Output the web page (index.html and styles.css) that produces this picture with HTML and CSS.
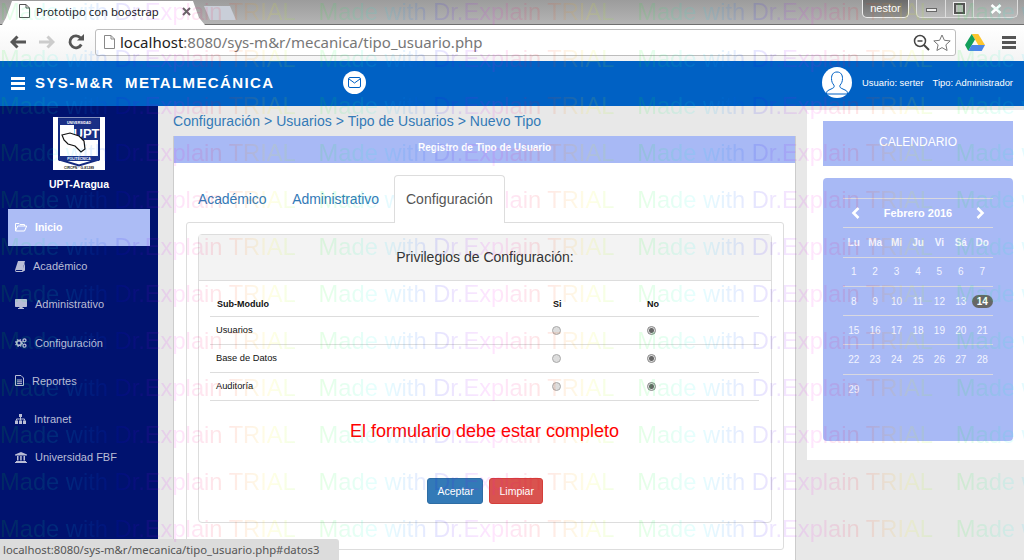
FILE: index.html
```html
<!DOCTYPE html>
<html lang="es">
<head>
    <meta charset="UTF-8">
    <meta name="viewport" content="width=device-width, initial-scale=1.0">
    <title>Prototipo con boostrap</title>
    <link rel="stylesheet" href="styles.css">
</head>
<body>
<div class="browser">
    <!-- Pestañas de Chrome -->
    <div class="tabstrip">
        <div class="tab">
            <svg class="tab-icon" width="11" height="14" viewBox="0 0 11 14"><path d="M.5.5h6.5l3.500 3.500v9.500h-10z M7 .5v3.500h3.500" fill="#fff" stroke="#555"/></svg>
            <span class="tab-title">Prototipo con boostrap</span>
            <svg class="tab-close" width="9" height="9" viewBox="0 0 9 9"><path d="M1 1l7 7M8 1l-7 7" stroke="#666" stroke-width="2"/></svg>
        </div>
        <div class="tab-new"></div>
        <div class="window-ctrl">
            <span class="win-user">nestor</span>
            <div class="win-btns">
                <span class="win-btn win-min"><i></i></span>
                <span class="win-btn win-max"><i></i></span>
                <span class="win-btn win-close">
                    <svg width="12" height="10" viewBox="0 0 12 10"><path d="M1.500 1l9 8M10.500 1l-9 8" stroke="#fff" stroke-width="2.600"/></svg>
                </span>
            </div>
        </div>
    </div>

    <div class="toolbar">
        <svg class="tool tool-back" width="16" height="14" viewBox="0 0 16 14"><path d="M7.500 1.500L2 7l5.500 5.500M2.500 7H16" fill="none" stroke="#555" stroke-width="3"/></svg>
        <svg class="tool tool-fwd" width="16" height="14" viewBox="0 0 16 14"><path d="M8.500 1.500L14 7l-5.500 5.500M13.500 7H0" fill="none" stroke="#ccc" stroke-width="3"/></svg>
        <svg class="tool tool-reload" width="16" height="16" viewBox="0 0 16 16"><path d="M13.300 10.500A6 6 0 1 1 12.600 4" fill="none" stroke="#555" stroke-width="2.800"/><path d="M9 6.500h7V0z" fill="#555"/></svg>
        <div class="addressbar">
            <svg class="addr-icon" width="11" height="14" viewBox="0 0 11 14"><path d="M.5.5h6.500l3.500 3.500v9.500h-10z M7 .5v3.500h3.500" fill="#fff" stroke="#888"/></svg>
            <span class="addr-url"><b>localhost</b>:8080/sys-m&amp;r/mecanica/tipo_usuario.php</span>
            <svg class="addr-zoom" width="17" height="17" viewBox="0 0 17 17"><circle cx="7" cy="7" r="5.500" fill="none" stroke="#444" stroke-width="1.500"/><path d="M4.500 7h5" stroke="#444" stroke-width="1.500"/><path d="M11 11l5 5" stroke="#444" stroke-width="2"/></svg>
            <svg class="addr-star" width="18" height="17" viewBox="0 0 18 17"><path d="M9 1l2.400 5.300 5.800.6-4.300 3.900 1.200 5.700L9 13.600l-5.100 2.900 1.200-5.700L.8 6.900l5.800-.6z" fill="#fff" stroke="#777"/></svg>
        </div>
        <svg class="tool-drive" width="20" height="17" viewBox="0 0 20 17"><path d="M6.700 0h6.600l6.700 11h-6.700z" fill="#fdc62f"/><path d="M6.700 0l3.300 5.500L3.300 17 0 11z" fill="#139f5b"/><path d="M3.300 17l3.300-6H20l-3.300 6z" fill="#4a86e8"/></svg>
        <div class="tool-menu"><i></i><i></i><i></i></div>
    </div>

    <!-- Barra superior -->
    <header class="topbar">
        <div class="burger"><i></i><i></i><i></i></div>
        <div class="brand"><span>SYS-M&amp;R</span><span>METALMECÁNICA</span></div>
        <span class="mail-badge">
            <svg width="13" height="11" viewBox="0 0 13 11"><rect x=".5" y=".5" width="12" height="10" rx="1.500" fill="none" stroke="#0061c4"/><path d="M1 2l5.500 4L12 2" fill="none" stroke="#0061c4"/></svg>
        </span>
        <div class="user-box">
            <span class="avatar">
                <svg width="22" height="24" viewBox="0 0 22 24"><path d="M11 1c-4 0-5.500 3-5.500 6.500 0 3 1 5 2.300 6.500.7 1 .5 2.500-1 3.200L2 19.500c-1 .6-1.500 1.500-1.500 3.500h21c0-2-.5-2.900-1.500-3.500l-4.800-2.300c-1.500-.7-1.700-2.200-1-3.200 1.300-1.500 2.300-3.500 2.300-6.500C16.500 4 15 1 11 1z" fill="none" stroke="#0061c4"/></svg>
            </span>
            <span class="user-text">Usuario: serter</span>
            <span class="user-text">Tipo: Administrador</span>
        </div>
    </header>

    <div class="main">
        <!-- Menu lateral -->
        <aside class="sidebar">
            <div class="logo">
                <svg width="52" height="53" viewBox="0 0 52 53">
                    <rect width="52" height="53" fill="#fff"/>
                    <path d="M6 1.500h40v41l-20 6-20-6z" fill="#fff" stroke="#13297f" stroke-width="2"/>
                    <rect x="6" y="2" width="40" height="6" fill="#1a2f85"/>
                    <text x="26" y="6.800" class="logo-small" fill="#fff">UNIVERSIDAD</text>
                    <rect x="21" y="8" width="25" height="15" fill="#1a2f85"/>
                    <text x="33.500" y="20.500" class="logo-upt" fill="#fff">UPT</text>
                    <path d="M9 18l8-2 9 3 5 5 1 8 -4 3-6-6-7-2-4-4z" fill="#fff" stroke="#111" stroke-width="1.200"/>
                    <rect x="6" y="39" width="40" height="5" fill="#1a2f85"/>
                    <text x="26" y="43" class="logo-small" fill="#fff">POLITÉCNICA</text>
                    <text x="26" y="51.500" class="logo-small" fill="#222">CIRCPN · G-81289</text>
                </svg>
            </div>
            <div class="campus">UPT-Aragua</div>
            <nav class="side-menu">
                <a class="side-item active" href="#">
                    <svg width="12" height="10" viewBox="0 0 12 10"><path d="M.5 9V1.500h3.500l1 1h4.500V4M.5 9l2.200-5h9l-2.200 5z" fill="none" stroke="currentColor"/></svg>
                    Inicio
                </a>
                <a class="side-item" href="#">
                    <svg width="10" height="11" viewBox="0 0 10 11"><path d="M3 0h7L7.500 9H1.500c-.6 0-.8.500-.7 1H7l3-8v7.500L7.500 11H1.500C.3 11-.2 9.800.2 8.500z" fill="currentColor"/></svg>
                    Académico
                </a>
                <a class="side-item" href="#">
                    <svg width="12" height="10" viewBox="0 0 12 10"><path d="M1 0h10c.6 0 1 .4 1 1v6c0 .6-.4 1-1 1H7.500l.3 1H9v1H3V9h1.200l.3-1H1C.4 8 0 7.600 0 7V1c0-.6.4-1 1-1z" fill="currentColor"/></svg>
                    Administrativo
                </a>
                <a class="side-item" href="#">
                    <svg width="12" height="10" viewBox="0 0 12 10"><circle cx="4" cy="5" r="2.300" fill="none" stroke="currentColor" stroke-width="1.600"/><circle cx="4" cy="5" r="3.400" fill="none" stroke="currentColor" stroke-width="1.200" stroke-dasharray="1.500 1.200"/><circle cx="9.500" cy="2.300" r="1.500" fill="none" stroke="currentColor" stroke-width="1.300"/><circle cx="9.500" cy="7.700" r="1.500" fill="none" stroke="currentColor" stroke-width="1.300"/></svg>
                    Configuración
                </a>
                <a class="side-item" href="#">
                    <svg width="9" height="11" viewBox="0 0 9 11"><path d="M.5.5h5.500l2.500 2.500v7.500h-8zM2 5h5M2 6.800h5M2 8.600h5" fill="none" stroke="currentColor"/></svg>
                    Reportes
                </a>
                <a class="side-item" href="#">
                    <svg width="11" height="10" viewBox="0 0 11 10"><path d="M4 0h3v3H4zM0 6.500h3V10H0zM4 6.500h3V10H4zM8 6.500h3V10H8z" fill="currentColor"/><path d="M5.500 3v3.500M1.500 6.500V5h8v1.500" fill="none" stroke="currentColor"/></svg>
                    Intranet
                </a>
                <a class="side-item" href="#">
                    <svg width="12" height="11" viewBox="0 0 12 11"><path d="M6 0l6 2.500V3.500H0V2.500zM1 9h10v1H1zM0 10h12v1H0zM2 4h1.500v4.500H2zM5.200 4h1.500v4.500H5.200zM8.500 4H10v4.500H8.500z" fill="currentColor"/></svg>
                    Universidad FBF
                </a>
            </nav>
        </aside>

        <main class="content">
            <div class="crumbs">Configuración &gt; Usuarios &gt; Tipo de Usuarios &gt; Nuevo Tipo</div>
            <section class="panel">
                <div class="panel-title">Registro de Tipo de Usuario</div>
                <div class="panel-body">
                    <ul class="nav-tabs">
                        <li><a href="#datos1">Académico</a></li>
                        <li><a href="#datos2">Administrativo</a></li>
                        <li class="active"><a href="#datos3">Configuración</a></li>
                    </ul>
                    <div class="tab-pane">
                        <form class="box">
                            <div class="box-head">Privilegios de Configuración:</div>
                            <div class="box-body">
                                <table class="priv-table">
                                    <thead>
                                        <tr><th class="col-name">Sub-Modulo</th><th class="col-si">Si</th><th>No</th></tr>
                                    </thead>
                                    <tbody>
                                        <tr>
                                            <td>Usuarios</td>
                                            <td><input type="radio" name="p1"></td>
                                            <td class="col-no"><input type="radio" name="p1" checked></td>
                                        </tr>
                                        <tr class="dark-line">
                                            <td>Base de Datos</td>
                                            <td><input type="radio" name="p2"></td>
                                            <td class="col-no"><input type="radio" name="p2" checked></td>
                                        </tr>
                                        <tr>
                                            <td>Auditoría</td>
                                            <td><input type="radio" name="p3"></td>
                                            <td class="col-no"><input type="radio" name="p3" checked></td>
                                        </tr>
                                    </tbody>
                                </table>
                                <p class="form-error">El formulario debe estar completo</p>
                                <div class="form-btns">
                                    <button type="button" class="btn btn-blue">Aceptar</button>
                                    <button type="button" class="btn btn-red">Limpiar</button>
                                </div>
                            </div>
                        </form>
                    </div>
                </div>
            </section>
        </main>

        <aside class="right-col">
            <div class="right-inner">
                <div class="cal-title">CALENDARIO</div>
                <div class="cal-card">
                    <table class="calendar">
                        <tr>
                            <th colspan="7">
                                <div class="cal-head">
                                    <svg width="9" height="12" viewBox="0 0 9 12"><path d="M7.500 1L2.500 6l5 5" fill="none" stroke="#fff" stroke-width="2.600"/></svg>
                                    <span>Febrero 2016</span>
                                    <svg width="9" height="12" viewBox="0 0 9 12"><path d="M1.500 1l5 5-5 5" fill="none" stroke="#fff" stroke-width="2.600"/></svg>
                                </div>
                            </th>
                        </tr>
                        <tr class="cal-days"><td>Lu</td><td>Ma</td><td>Mi</td><td>Ju</td><td>Vi</td><td>Sá</td><td>Do</td></tr>
                        <tr><td>1</td><td>2</td><td>3</td><td>4</td><td>5</td><td>6</td><td>7</td></tr>
                        <tr><td>8</td><td>9</td><td>10</td><td>11</td><td>12</td><td>13</td><td><span class="today">14</span></td></tr>
                        <tr><td>15</td><td>16</td><td>17</td><td>18</td><td>19</td><td>20</td><td>21</td></tr>
                        <tr><td>22</td><td>23</td><td>24</td><td>25</td><td>26</td><td>27</td><td>28</td></tr>
                        <tr><td>29</td><td></td><td></td><td></td><td></td><td></td><td></td></tr>
                    </table>
                </div>
            </div>
        </aside>
    </div>

    <div class="status-bubble">localhost:8080/sys-m&amp;r/mecanica/tipo_usuario.php#datos3</div>

    <!-- Marca de agua -->
    <div class="watermark" aria-hidden="true">
        <div><span>Made with Dr.Explain TRIAL</span><span>Made with Dr.Explain TRIAL</span><span>Made with Dr.Explain TRIAL</span><span>Made with Dr.Explain TRIAL</span></div>
        <div><span>Made with Dr.Explain TRIAL</span><span>Made with Dr.Explain TRIAL</span><span>Made with Dr.Explain TRIAL</span><span>Made with Dr.Explain TRIAL</span></div>
        <div><span>Made with Dr.Explain TRIAL</span><span>Made with Dr.Explain TRIAL</span><span>Made with Dr.Explain TRIAL</span><span>Made with Dr.Explain TRIAL</span></div>
        <div><span>Made with Dr.Explain TRIAL</span><span>Made with Dr.Explain TRIAL</span><span>Made with Dr.Explain TRIAL</span><span>Made with Dr.Explain TRIAL</span></div>
        <div><span>Made with Dr.Explain TRIAL</span><span>Made with Dr.Explain TRIAL</span><span>Made with Dr.Explain TRIAL</span><span>Made with Dr.Explain TRIAL</span></div>
        <div><span>Made with Dr.Explain TRIAL</span><span>Made with Dr.Explain TRIAL</span><span>Made with Dr.Explain TRIAL</span><span>Made with Dr.Explain TRIAL</span></div>
        <div><span>Made with Dr.Explain TRIAL</span><span>Made with Dr.Explain TRIAL</span><span>Made with Dr.Explain TRIAL</span><span>Made with Dr.Explain TRIAL</span></div>
        <div><span>Made with Dr.Explain TRIAL</span><span>Made with Dr.Explain TRIAL</span><span>Made with Dr.Explain TRIAL</span><span>Made with Dr.Explain TRIAL</span></div>
        <div><span>Made with Dr.Explain TRIAL</span><span>Made with Dr.Explain TRIAL</span><span>Made with Dr.Explain TRIAL</span><span>Made with Dr.Explain TRIAL</span></div>
        <div><span>Made with Dr.Explain TRIAL</span><span>Made with Dr.Explain TRIAL</span><span>Made with Dr.Explain TRIAL</span><span>Made with Dr.Explain TRIAL</span></div>
        <div><span>Made with Dr.Explain TRIAL</span><span>Made with Dr.Explain TRIAL</span><span>Made with Dr.Explain TRIAL</span><span>Made with Dr.Explain TRIAL</span></div>
        <div><span>Made with Dr.Explain TRIAL</span><span>Made with Dr.Explain TRIAL</span><span>Made with Dr.Explain TRIAL</span><span>Made with Dr.Explain TRIAL</span></div>
    </div>
</div>
</body>
</html>
```

FILE: styles.css
```css
/* CSS */
* {
    box-sizing: border-box;
}
body {
    margin: 0;
    font-family: "Liberation Sans", Arial, sans-serif;
    background-color: #e8e8e8;
}
.browser {
    position: relative;
    display: flex;
    flex-direction: column;
    width: 1024px;
    height: 560px;
    overflow: hidden;
}

/* Chrome */
.tabstrip {
    display: flex;
    flex: none;
    height: 25px;
    padding: 1px 6px 0 2px;
    background: linear-gradient(#9c9c9c, #b4b4b4);
    border-bottom: 1px solid #6f6f6f;
}
.tab {
    display: flex;
    align-items: center;
    width: 203px;
    height: 24px;
    padding: 0 14px 4px 17px;
    background-color: #fff;
    clip-path: polygon(0 100%, 4px 70%, 10px 0, calc(100% - 12px) 0, calc(100% - 6px) 70%, 100% 100%);
}
.tab-icon {
    flex: none;
}
.tab-title {
    flex: 1;
    margin-left: 6px;
    font-family: "Noto Sans", sans-serif;
    font-size: 11.300px;
    color: #222;
    white-space: nowrap;
}
.tab-close {
    flex: none;
}
.tab-new {
    width: 32px;
    height: 14px;
    margin: 5px 0 0 -1px;
    background-color: #c9ced8;
    clip-path: polygon(0 0, calc(100% - 6px) 0, 100% 100%, 6px 100%);
}
.window-ctrl {
    display: flex;
    gap: 7px;
    margin-left: auto;
    margin-top: -1px;
}
.win-user {
    width: 47px;
    height: 18px;
    border: 1px solid #eee;
    border-top: none;
    border-radius: 0 0 5px 5px;
    background: linear-gradient(#6b6b6b, #8f8f8f);
    color: #fff;
    font-size: 11px;
    line-height: 17px;
    text-align: center;
}
.win-btns {
    display: flex;
    height: 18px;
    border: 1px solid #ddd;
    border-top: none;
    border-radius: 0 0 5px 5px;
    background: linear-gradient(#a5a5a5, #bbb);
}
.win-btn {
    display: flex;
    align-items: center;
    justify-content: center;
    width: 28px;
    border-left: 1px solid #ddd;
}
.win-btn:first-child {
    border-left: none;
}
.win-close {
    width: 44px;
}
.win-min i {
    width: 11px;
    height: 4px;
    margin-top: 3px;
    background-color: #eee;
    border: 1px solid #666;
}
.win-max i {
    width: 11px;
    height: 11px;
    background-color: #bbb;
    border: 2px solid #555;
    outline: 1px solid #eee;
}
.toolbar {
    display: flex;
    flex: none;
    align-items: center;
    height: 36px;
    padding: 0 8px 2px 10px;
    background: linear-gradient(#fff, #f4f4f4);
}
.tool-fwd {
    margin-left: 13px;
}
.tool-reload {
    margin-left: 13px;
}
.addressbar {
    display: flex;
    align-items: center;
    width: 862px;
    height: 27px;
    margin-left: 11px;
    padding: 0 4px 0 8px;
    background-color: #fff;
    border: 1px solid #bdbdbd;
    border-radius: 3px;
}
.addr-icon {
    flex: none;
}
.addr-url {
    flex: 1;
    margin-left: 5px;
    font-family: "Noto Sans", sans-serif;
    font-size: 15px;
    color: #777;
    white-space: nowrap;
}
.addr-url b {
    font-weight: normal;
    color: #222;
}
.addr-star {
    margin-left: 3px;
}
.tool-drive {
    margin-left: 9px;
}
.tool-menu {
    display: flex;
    flex-direction: column;
    gap: 2px;
    margin-left: 17px;
}
.tool-menu i {
    width: 14px;
    height: 3px;
    background-color: #555;
}

/* Barra superior */
.topbar {
    display: flex;
    flex: none;
    align-items: center;
    height: 45px;
    padding: 0 11px 2px 11px;
    background-color: #0061c4;
    color: #fff;
}
.burger {
    display: flex;
    flex-direction: column;
    gap: 2px;
    margin-top: 1px;
}
.burger i {
    width: 14px;
    height: 3px;
    background-color: #fff;
}
.brand {
    display: flex;
    gap: 11px;
    width: 308px;
    margin-left: 10px;
    font-size: 15px;
    font-weight: bold;
    letter-spacing: 1.400px;
}
.mail-badge {
    display: flex;
    align-items: center;
    justify-content: center;
    width: 23px;
    height: 23px;
    border-radius: 50%;
    background-color: #fff;
}
.user-box {
    display: flex;
    align-items: center;
    gap: 9px;
    margin-left: auto;
    font-size: 9.400px;
}
.avatar {
    display: flex;
    align-items: center;
    justify-content: center;
    width: 30px;
    height: 31px;
    margin-right: 1px;
    border-radius: 50%;
    background-color: #fff;
}

.main {
    display: flex;
    flex: 1;
    min-height: 0;
}

/* Menu lateral */
.sidebar {
    flex: none;
    width: 158px;
    padding-top: 11px;
    background-color: #00126f;
}
.logo {
    width: 52px;
    height: 53px;
    margin: 0 auto;
}
.logo svg {
    display: block;
}
.logo-small {
    font-size: 3.500px;
    font-weight: bold;
    text-anchor: middle;
}
.logo-upt {
    font-size: 13px;
    font-weight: bold;
    text-anchor: middle;
}
.campus {
    margin-top: 8px;
    color: #fff;
    font-size: 10.500px;
    font-weight: bold;
    line-height: 12px;
    text-align: center;
}
.side-menu {
    margin-top: 19px;
    padding: 0 8px;
}
.side-item {
    display: flex;
    align-items: center;
    gap: 8px;
    height: 38.250px;
    padding-left: 7px;
    color: #b9bdd6;
    font-size: 11px;
    text-decoration: none;
}
.side-item.active {
    height: 37px;
    margin-bottom: 1px;
    padding-bottom: 2px;
    background-color: #acbcf5;
    color: #fff;
    font-weight: bold;
    font-size: 10.500px;
}

/* Contenido */
.content {
    flex: none;
    width: 649px;
    padding: 5px 11px 0 15px;
}
.crumbs {
    color: #337ab7;
    font-size: 14px;
    letter-spacing: 0.050px;
    line-height: 20px;
    margin-bottom: 5px;
}
.panel {
    background-color: #fff;
    border-left: 1px solid #ccc;
    border-right: 1px solid #ccc;
    min-height: 440px;
    margin-right: 0;
}
.panel-title {
    height: 27px;
    background-color: #a8b9f5;
    color: #fff;
    font-size: 10px;
    font-weight: bold;
    line-height: 24px;
    text-align: center;
}
.panel-body {
    padding: 12px 11px 0 12px;
}
.nav-tabs {
    display: flex;
    gap: 2px;
    margin: 0;
    padding: 0;
    list-style-type: none;
    height: 47px;
}
.nav-tabs a {
    display: block;
    height: 47px;
    padding: 13px 11px 0;
    border: 1px solid transparent;
    border-bottom: none;
    border-radius: 4px 4px 0 0;
    color: #337ab7;
    font-size: 14px;
    letter-spacing: -0.100px;
    line-height: 20px;
    text-decoration: none;
}
.nav-tabs .active {
    margin-left: 1px;
}
.nav-tabs .active a {
    position: relative;
    z-index: 1;
    height: 48px;
    background-color: #fff;
    border-color: #ddd;
    color: #555;
    letter-spacing: 0.050px;
}
.tab-pane {
    height: 328px;
    padding: 11px 11px 0 11px;
    border: 1px solid #ddd;
    border-radius: 3px;
}
.box {
    height: 289px;
    border: 1px solid #ddd;
    border-radius: 4px;
}
.box-head {
    height: 46px;
    background-color: #f3f3f3;
    border-bottom: 1px solid #ddd;
    color: #333;
    font-size: 14px;
    line-height: 44px;
    text-align: center;
}
.box-body {
    padding: 11px 12px 0 11px;
}
.priv-table {
    width: 100%;
    border-collapse: collapse;
    color: #111;
    font-size: 9.300px;
}
.priv-table th {
    height: 24px;
    padding: 0 7px;
    border-bottom: 1px solid #ddd;
    font-size: 9px;
    text-align: left;
}
.priv-table td {
    height: 28px;
    padding: 0 6px;
    border-bottom: 1px solid #ddd;
    vertical-align: middle;
}
.priv-table .col-name {
    width: 336px;
}
.priv-table .col-si {
    width: 94px;
}
.priv-table .dark-line td {
    border-top: 1px solid #bbb;
}
.priv-table input {
    display: block;
    width: 9px;
    height: 9px;
    margin: 0;
    appearance: none;
    background-color: #ddd;
    border: 1px solid #aaa;
    border-radius: 50%;
}
.priv-table input:checked {
    background: radial-gradient(circle, #666 0, #666 2px, #ddd 3px);
    border-color: #888;
}
.priv-table td:nth-child(3) input {
    margin-left: 1px;
}
.form-error {
    margin: 19px 0 0;
    color: #f00;
    font-size: 18px;
    line-height: 22px;
    text-align: center;
}
.form-btns {
    display: flex;
    justify-content: center;
    gap: 6px;
    margin-top: 36px;
}
.btn {
    height: 26px;
    padding: 0 10px;
    border-radius: 3px;
    color: #fff;
    font-family: inherit;
    font-size: 10.500px;
    cursor: pointer;
}
.btn-blue {
    width: 56px;
    background-color: #337ab7;
    border: 1px solid #2e6da4;
}
.btn-red {
    width: 54px;
    background-color: #d9534f;
    border: 1px solid #d43f3a;
}

/* Calendario */
.right-col {
    flex: 1;
    padding-top: 4px;
}
.right-inner {
    height: 350px;
    padding: 11px 11px 0 16px;
    background-color: #fff;
}
.cal-title {
    height: 45px;
    background-color: #a8b9f5;
    color: #fff;
    font-size: 12px;
    line-height: 42px;
    text-align: center;
}
.cal-card {
    height: 263px;
    margin-top: 12px;
    padding: 20px 20px 0;
    background-color: #a8b9f5;
    border-radius: 4px;
}
.calendar {
    width: 150px;
    table-layout: fixed;
    border-collapse: collapse;
    color: #f2f4ff;
    font-size: 10px;
    text-align: center;
}
.calendar th, .calendar td {
    height: 29.300px;
    padding: 0;
    border-top: 1px solid #d8d8e0;
}
.calendar tr:last-child td {
    text-align: center;
}
.cal-head {
    display: flex;
    align-items: center;
    justify-content: space-between;
    padding: 0 8px;
    color: #fff;
    font-size: 11px;
    font-weight: bold;
}
.cal-days td {
    font-weight: bold;
}
.today {
    display: inline-block;
    width: 21px;
    border-radius: 7px;
    background-color: #666;
    color: #fff;
    font-weight: bold;
    line-height: 13px;
}

/* Superpuestos */
.status-bubble {
    position: absolute;
    left: 0;
    bottom: 0;
    width: 339px;
    height: 21px;
    padding-left: 3px;
    background-color: #dcdcdc;
    border-radius: 0 3px 0 0;
    color: #555;
    font-family: "Noto Sans", sans-serif;
    font-size: 11.300px;
    line-height: 21px;
    white-space: nowrap;
}
.watermark {
    position: absolute;
    top: -11px;
    left: 0;
    width: 1280px;
    pointer-events: none;
    font-size: 23.700px;
    line-height: 47px;
    white-space: nowrap;
}
.watermark div {
    display: flex;
    height: 47px;
}
.watermark span {
    flex: none;
    width: 318.600px;
    color: transparent;
    background-image: linear-gradient(90deg,
        hsla(120, 100%, 50%, 0.1) 0,
        hsla(180, 100%, 50%, 0.1) 19%,
        hsla(240, 100%, 50%, 0.1) 37%,
        hsla(300, 100%, 50%, 0.1) 54%,
        hsla(360, 100%, 50%, 0.1) 70%,
        hsla(60, 100%, 50%, 0.1) 85%,
        hsla(90, 100%, 50%, 0.1) 93%);
    -webkit-background-clip: text;
    background-clip: text;
}
```
